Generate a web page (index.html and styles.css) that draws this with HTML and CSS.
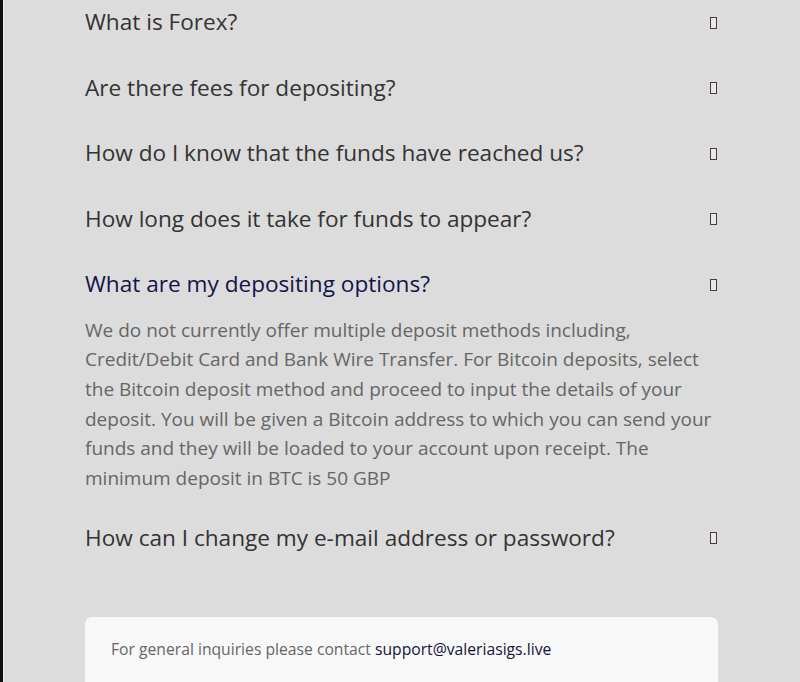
FILE: index.html
```html
<!DOCTYPE html>
<html lang="en">
<head>
<meta charset="utf-8">
<title>FAQ</title>
<link rel="stylesheet" href="styles.css">
</head>
<body>
<main class="page">
  <section class="faq">
    <div class="faq-item">
      <div class="faq-q"><span class="q-text">What is Forex?</span><span class="q-icon"></span></div>
    </div>
    <div class="faq-item">
      <div class="faq-q"><span class="q-text">Are there fees for depositing?</span><span class="q-icon"></span></div>
    </div>
    <div class="faq-item">
      <div class="faq-q"><span class="q-text">How do I know that the funds have reached us?</span><span class="q-icon"></span></div>
    </div>
    <div class="faq-item">
      <div class="faq-q"><span class="q-text">How long does it take for funds to appear?</span><span class="q-icon"></span></div>
    </div>
    <div class="faq-item open">
      <div class="faq-q"><span class="q-text">What are my depositing options?</span><span class="q-icon"></span></div>
      <p class="faq-a">We do not currently offer multiple deposit methods including, Credit/Debit Card and Bank Wire Transfer. For Bitcoin deposits, select the Bitcoin deposit method and proceed to input the details of your deposit. You will be given a Bitcoin address to which you can send your funds and they will be loaded to your account upon receipt. The minimum deposit in BTC is 50 GBP</p>
    </div>
    <div class="faq-item">
      <div class="faq-q"><span class="q-text">How can I change my e-mail address or password?</span><span class="q-icon"></span></div>
    </div>
  </section>
  <footer class="contact">
    <p>For general inquiries please contact <a class="mail" href="#">support@valeriasigs.live</a></p>
  </footer>
</main>
</body>
</html>
```

FILE: styles.css
```css
html, body {
  margin: 0;
  padding: 0;
}
body {
  background: #dcdcdc;
  border-left: 3px solid #111;
  box-shadow: inset 1px 0 0 #eeeeee;
  min-height: 682px;
  font-family: "Open Sans", "Noto Sans", sans-serif;
  overflow: hidden;
}
.page {
  width: 633px;
  margin: -11px auto 0 82px;
}
.faq-q {
  height: 65.5px;
  display: flex;
  align-items: center;
  justify-content: space-between;
}
.q-text {
  font-size: 22.6px;
  color: #333;
}
.open .q-text {
  color: #14144a;
}
.q-icon {
  width: 5px;
  height: 10px;
  border: 1px solid #4a3a40;
  background: #e8e8ee;
  margin-right: 1px;
  margin-top: 2px;
}
.faq-a {
  margin: -1px 0 0;
  padding-bottom: 11px;
  font-size: 19px;
  line-height: 29.7px;
  color: #666;
}
.contact {
  margin-top: 47px;
  background: #f8f8f8;
  border-radius: 7px;
  padding: 21px 26px 30px;
}
.contact p {
  margin: 0;
  font-size: 15.7px;
  color: #666;
}
.mail {
  color: #14143a;
  text-decoration: none;
}
```
